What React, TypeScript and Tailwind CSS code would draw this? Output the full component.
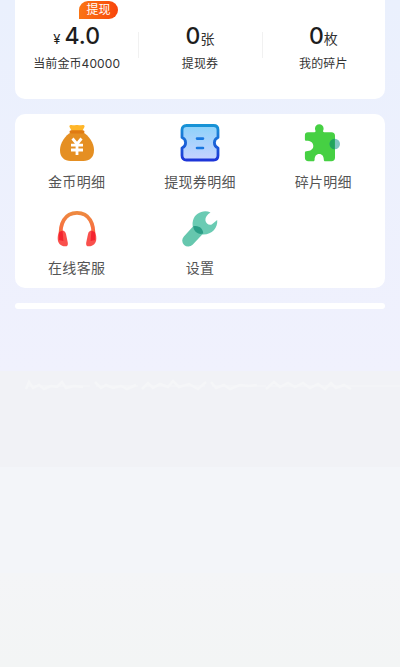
import type { ReactNode } from "react";

interface Stat {
  prefix?: string;
  value: string;
  unit?: string;
  label: string;
  badge?: string;
}

const stats: Stat[] = [
  { prefix: "¥", value: "4.0", label: "当前金币40000", badge: "提现" },
  { value: "0", unit: "张", label: "提现券" },
  { value: "0", unit: "枚", label: "我的碎片" },
];

const CoinBagIcon = () => (
  <svg width="40" height="40" viewBox="0 0 40 40">
    <path
      d="M14.500 9C8 12.500 3 20 3 27c0 7.500 4.500 11 10.500 11h13c6 0 10.500-3.500 10.500-11 0-7-5-14.500-11.500-18z"
      fill="#e58f22"
    />
    <path
      d="M13 2.200c1.800-.9 3.200.4 5 .1 1.400-.3 2.600-.3 4 0 1.800.3 3.200-1 5-.1.800.4.700 1.300.2 2.200L25 8.500H15l-2.200-4.100c-.5-.9-.6-1.800.2-2.200z"
      fill="#ffb629"
    />
    <rect x="12.500" y="7.200" width="15" height="3.200" rx="1.600" fill="#e07b12" />
    <path
      d="M15.500 15.500L20 21l4.500-5.500M14 22.200h12M14 27h12M20 21v11"
      fill="none"
      stroke="#fff"
      strokeWidth="2.800"
    />
  </svg>
);

const TicketIcon = () => (
  <svg width="42" height="40" viewBox="0 0 42 40">
    <defs>
      <linearGradient id="ticketLine" x1="0" y1="0" x2="0" y2="1">
        <stop offset="0" stopColor="#1793d6" />
        <stop offset="1" stopColor="#1d35d8" />
      </linearGradient>
      <linearGradient id="ticketFill" x1="0" y1="0" x2="0" y2="1">
        <stop offset="0" stopColor="#8dd2fa" />
        <stop offset="1" stopColor="#c8d3ff" />
      </linearGradient>
    </defs>
    <path
      d="M7.500 2.500h27c3 0 4.500 1.500 4.500 4.500v7.500c-2.300.9-3.600 2.700-3.600 5.200s1.300 4.400 3.600 5.300v7.500c0 3-1.500 4.500-4.500 4.500h-27c-3 0-4.500-1.500-4.500-4.500V25c2.300-.9 3.600-2.800 3.600-5.300S5.300 15.400 3 14.500V7c0-3 1.500-4.500 4.500-4.500z"
      fill="url(#ticketFill)"
      stroke="url(#ticketLine)"
      strokeWidth="2.800"
      strokeLinejoin="round"
    />
    <path d="M18 15.600h6M18 25h6" stroke="#1878e0" strokeWidth="2.600" strokeLinecap="round" />
  </svg>
);

const PuzzleIcon = () => (
  <svg width="40" height="40" viewBox="0 0 40 40" className="overflow-visible">
    <g transform="translate(-3 0)">
      <path
        d="M8 9.200h6.500c.8 0 1.200-.6 1-1.400-.3-.8-.5-1.500-.5-2.300 0-2.500 1.900-4.300 4.300-4.300s4.300 1.800 4.300 4.300c0 .8-.2 1.500-.5 2.300-.2.800.2 1.400 1 1.400h7.400c2.200 0 3.500 1.300 3.500 3.500v22.100c0 2.200-1.300 3.500-3.500 3.500h-6.300c-1 0-1.400-.6-1.400-1.500 0-3.500-1.600-5.800-4.600-5.800s-4.600 2.300-4.600 5.800c0 .9-.4 1.500-1.400 1.500H8.400c-2.200 0-3.500-1.300-3.500-3.500V30c0-1.200.5-1.800 1.500-1.800 4 0 6.900-1.900 6.900-5.200s-2.900-5.200-6.900-5.200c-1 0-1.500-.6-1.500-1.600v-3.700c0-2.200 1-3.300 3.100-3.300z"
        fill="#46d043"
      />
      <circle cx="34.800" cy="21" r="5.200" fill="#2e9e9b" fillOpacity="0.600" />
      <path d="M34.700 15.800v10.400a5.200 5.200 0 0 1 0-10.400z" fill="#21a45c" />
    </g>
  </svg>
);

const HeadphonesIcon = () => (
  <svg width="42" height="40" viewBox="0 0 42 40">
    <defs>
      <linearGradient id="band" x1="0" y1="0" x2="0" y2="1">
        <stop offset="0" stopColor="#ee8940" />
        <stop offset="1" stopColor="#fb6040" />
      </linearGradient>
    </defs>
    <path
      d="M4.800 28.500c-1.300-14 4-24.600 16.200-24.600s17.500 10.600 16.200 24.600"
      fill="none"
      stroke="url(#band)"
      strokeWidth="3.800"
    />
    <path d="M3 23.200l3.500-1.600c1.600 0 2.900 1.500 3.500 3.300l1.800 8.800c.4 2.500-.4 3.600-2.500 3.600-4.600 0-7.600-2.900-7.600-7.800 0-2.200.3-4.400 1.300-6.300z" fill="#f9504c" />
    <path d="M39 23.200l-3.500-1.600c-1.600 0-2.900 1.500-3.500 3.300l-1.800 8.800c-.4 2.500.4 3.600 2.500 3.600 4.600 0 7.600-2.900 7.600-7.800 0-2.200-.3-4.400-1.300-6.300z" fill="#f9504c" />
    <path d="M3 23l3.600-1.200.8 10.200-4.500-1zM39 23l-3.600-1.200-.8 10.200 4.500-1z" fill="#f4242f" />
  </svg>
);

const WrenchIcon = () => (
  <svg width="40" height="40" viewBox="0 0 40 40">
    <path
      d="M30.500 3.600c-6.500-3.400-15.500.4-17.500 7.900-1 3.700-.3 6.400.8 9 2.600 3.400 5.800 5 9.700 5 8.500 0 14.500-6.600 13.700-14.500l-5.500 4.500c-2.500 1.200-6-.8-6.300-4.200-.3-3 2-5.700 5.100-7.700z"
      fill="#6acbb3"
    />
    <path d="M13.200 17.300L3.900 27.400a6 6 0 0 0 8.700 8.300l10.600-11.200c-2.600-5.400-5.600-8-10-7.200z" fill="#66c7ae" />
    <path d="M13.200 17.300c5.700-1.600 10.200 2.600 10 7.200-4.900 1.700-9.700-2-10-7.200z" fill="#2b9e87" />
  </svg>
);

const menu: { label: string; icon: ReactNode }[] = [
  { label: "金币明细", icon: <CoinBagIcon /> },
  { label: "提现券明细", icon: <TicketIcon /> },
  { label: "碎片明细", icon: <PuzzleIcon /> },
  { label: "在线客服", icon: <HeadphonesIcon /> },
  { label: "设置", icon: <WrenchIcon /> },
];

const StatItem = ({ prefix, value, unit, label, badge }: Stat) => (
  <div className="relative flex flex-col items-center">
    {badge && (
      <span className="absolute left-[64px] -top-[19px] flex h-[18px] w-[39px] items-center justify-center rounded-full rounded-bl-none bg-linear-to-r from-[#fa7414] to-[#f8440b] text-[12px] leading-none text-white">
        {badge}
      </span>
    )}
    <div className="flex h-8 items-baseline text-[#1d1d1d]">
      {prefix && <span className="mr-1 text-[13px]">{prefix}</span>}
      <span className="text-[23px] leading-8 font-medium">{value}</span>
      {unit && <span className="text-[14px] text-[#333]">{unit}</span>}
    </div>
    <p className="mt-[2px] text-[12px] leading-5 tracking-[0.1px] whitespace-nowrap text-[#333]">{label}</p>
  </div>
);

export default function App() {
  return (
    <div className="flex h-[667px] w-[400px] flex-col overflow-hidden bg-linear-to-b from-[#eaf0fd] to-[#f0f1fd] to-[370px] font-['Inter','Noto_Sans_CJK_SC',sans-serif]">
      <section className="mx-[15px] flex h-[99px] shrink-0 rounded-b-[10px] bg-white pt-[20px]">
        {stats.map((stat, i) => (
          <div key={stat.label} className="relative flex-1">
            {i > 0 && <span className="absolute top-[12px] left-0 h-[26px] w-px bg-[#f1f1f1]" />}
            <StatItem {...stat} />
          </div>
        ))}
      </section>

      <section className="mx-[15px] mt-[15px] grid h-[174px] shrink-0 auto-rows-[86px] grid-cols-3 rounded-[10px] bg-white pt-[9px]">
        {menu.map((item) => (
          <div key={item.label} className="flex flex-col items-center">
            {item.icon}
            <span className="mt-[9px] text-[14px] leading-5 tracking-[0.3px] text-[#555]">{item.label}</span>
          </div>
        ))}
      </section>

      <div className="mx-[15px] mt-[15px] h-[6px] shrink-0 rounded-[3px] bg-white" />

      <div className="mt-[62px] h-[96px] shrink-0 bg-[#f1f2f6] pt-[6px]">
        {/* faint worn line */}
        <svg width="400" height="16" viewBox="0 0 400 16" fill="none" stroke="#f5f6f8">
          <path d="M26 12l3-7 4 6 6-3 5 4 7-3 6 1 5-5 4 6 8-2 9 1M95 5l6 6 5-3 7 3 8-2 6 3 9-4M142 12l6-6 5 5 7-4 8 3 5-6 6 6 10-3 9 5 8-7M211 5l5 6 8-3 6 4 10-4 9 1 8-1M266 12l8-7 6 5 8-4 7 4 8-4 7 5 8-4 7 5 6-6 5 5 8-3 7 4" strokeWidth="2.500" />
          <path d="M28 9h62M96 9h42M145 9h60M212 9h54M268 9h132" />
        </svg>
      </div>
      <div className="h-[106px] shrink-0 bg-[#f3f5f9]" />
      <div className="flex-1 bg-linear-to-b from-[#f4f5f7] to-[#f3f5f5]" />
    </div>
  );
}
